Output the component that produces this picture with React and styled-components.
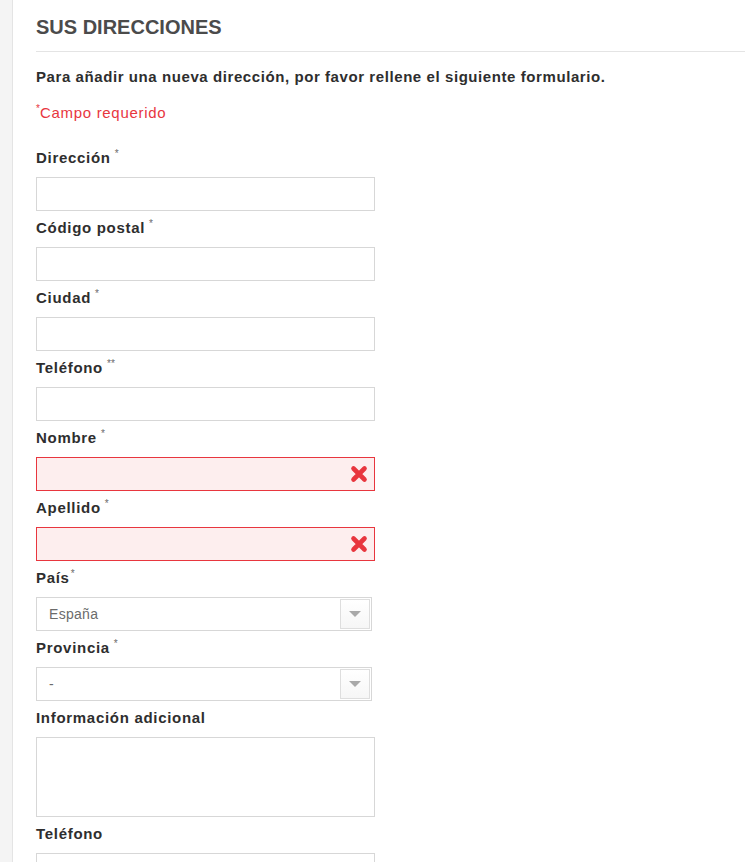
import React from "react";
import styled, { createGlobalStyle } from "styled-components";

const colors = {
  title: "#4b4b4b",
  text: "#2e2e2e",
  muted: "#6b6b6b",
  border: "#d7d7d7",
  error: "#e8363e",
  errorBg: "#fdeeee",
  rule: "#e4e4e4",
  side: "#f4f4f4",
};

const GlobalStyle = createGlobalStyle`
  body {
    margin: 0;
    background: #fff;
    font-family: "Liberation Sans", Arial, sans-serif;
  }
`;

const Page = styled.div`
  display: flex;
  min-height: 862px;
`;

const Side = styled.div`
  width: 12px;
  flex-shrink: 0;
  background: ${colors.side};
  border-right: 1px solid ${colors.rule};
`;

const Main = styled.div`
  flex: 1;
  padding: 15px 0 0 23px;
`;

const Title = styled.h1`
  margin: 0;
  padding-bottom: 12px;
  border-bottom: 1px solid ${colors.rule};
  font-size: 20px;
  line-height: 24px;
  font-weight: bold;
  color: ${colors.title};
`;

const Intro = styled.p`
  margin: 15px 0 0;
  font-size: 15px;
  line-height: 20px;
  font-weight: bold;
  letter-spacing: 0.58px;
  color: ${colors.text};
`;

const Required = styled.p`
  margin: 16px 0 25px;
  font-size: 15px;
  line-height: 20px;
  letter-spacing: 0.7px;
  color: ${colors.error};
`;

const Star = styled.sup`
  font-size: 10px;
  line-height: 0;
  vertical-align: 6px;
  margin-left: ${(p) => (p.$tight ? "1px" : "4px")};
  color: ${(p) => p.$color || colors.muted};
  font-weight: normal;
  letter-spacing: 0;
`;

const Form = styled.div`
  display: flex;
  flex-direction: column;
  width: 339px;
`;

const Field = styled.div`
  display: flex;
  flex-direction: column;
  gap: 9px;
  margin-bottom: 7px;
`;

const Label = styled.label`
  font-size: 15px;
  line-height: 20px;
  font-weight: bold;
  letter-spacing: 0.7px;
  color: ${colors.text};
`;

const InputWrap = styled.div`
  position: relative;
  display: flex;
`;

const Input = styled.input`
  box-sizing: border-box;
  width: 339px;
  height: 34px;
  padding: 0 12px;
  border: 1px solid ${(p) => (p.$error ? colors.error : colors.border)};
  background: ${(p) => (p.$error ? colors.errorBg : "#fff")};
  font: 14px "Liberation Sans", Arial, sans-serif;
  outline: none;
`;

const ErrorIcon = styled.svg`
  position: absolute;
  right: 7px;
  top: 8px;
  width: 18px;
  height: 18px;
`;

const TextArea = styled.textarea`
  box-sizing: border-box;
  width: 339px;
  height: 80px;
  border: 1px solid ${colors.border};
  resize: none;
  outline: none;
  font: 14px "Liberation Sans", Arial, sans-serif;
`;

const Select = styled.div`
  box-sizing: border-box;
  width: 336px;
  height: 34px;
  display: flex;
  align-items: center;
  justify-content: space-between;
  padding: 0 1px 0 12px;
  border: 1px solid ${colors.border};
  font-size: 14px;
  letter-spacing: 0.3px;
  color: ${colors.muted};
`;

const Arrow = styled.div`
  box-sizing: border-box;
  width: 30px;
  height: 30px;
  display: flex;
  align-items: center;
  justify-content: center;
  border: 1px solid #dedede;
  background: linear-gradient(#fff, #f6f6f6);

  &::after {
    content: "";
    border-left: 6px solid transparent;
    border-right: 6px solid transparent;
    border-top: 6px solid #a9a9a9;
  }
`;

const Cross = () => (
  <ErrorIcon viewBox="0 0 18 18">
    <path
      d="M3.5 3.5 L14.5 14.5 M14.5 3.5 L3.5 14.5"
      stroke={colors.error}
      strokeWidth="4.6"
      strokeLinecap="round"
    />
  </ErrorIcon>
);

const fields = [
  { label: "Dirección", star: "*" },
  { label: "Código postal", star: "*" },
  { label: "Ciudad", star: "*" },
  { label: "Teléfono", star: "**" },
  { label: "Nombre", star: "*", error: true },
  { label: "Apellido", star: "*", error: true },
];

const App = () => {
  return (
    <Page>
      <GlobalStyle />
      <Side />
      <Main>
        <Title>SUS DIRECCIONES</Title>
        <Intro>Para añadir una nueva dirección, por favor rellene el siguiente formulario.</Intro>
        <Required>
          <Star $tight $color={colors.error} style={{ marginLeft: 0 }}>*</Star>Campo requerido
        </Required>

        <Form>
          {fields.map((f) => (
            <Field key={f.label}>
              <Label>
                {f.label}
                <Star>{f.star}</Star>
              </Label>
              <InputWrap>
                <Input $error={f.error} />
                {f.error && <Cross />}
              </InputWrap>
            </Field>
          ))}

          <Field>
            <Label>
              País<Star $tight>*</Star>
            </Label>
            <Select>
              España
              <Arrow />
            </Select>
          </Field>

          <Field>
            <Label>
              Provincia<Star>*</Star>
            </Label>
            <Select>
              -
              <Arrow />
            </Select>
          </Field>

          <Field>
            <Label>Información adicional</Label>
            <TextArea />
          </Field>

          <Field>
            <Label>Teléfono</Label>
            <Input />
          </Field>
        </Form>
      </Main>
    </Page>
  );
};

export default App;
